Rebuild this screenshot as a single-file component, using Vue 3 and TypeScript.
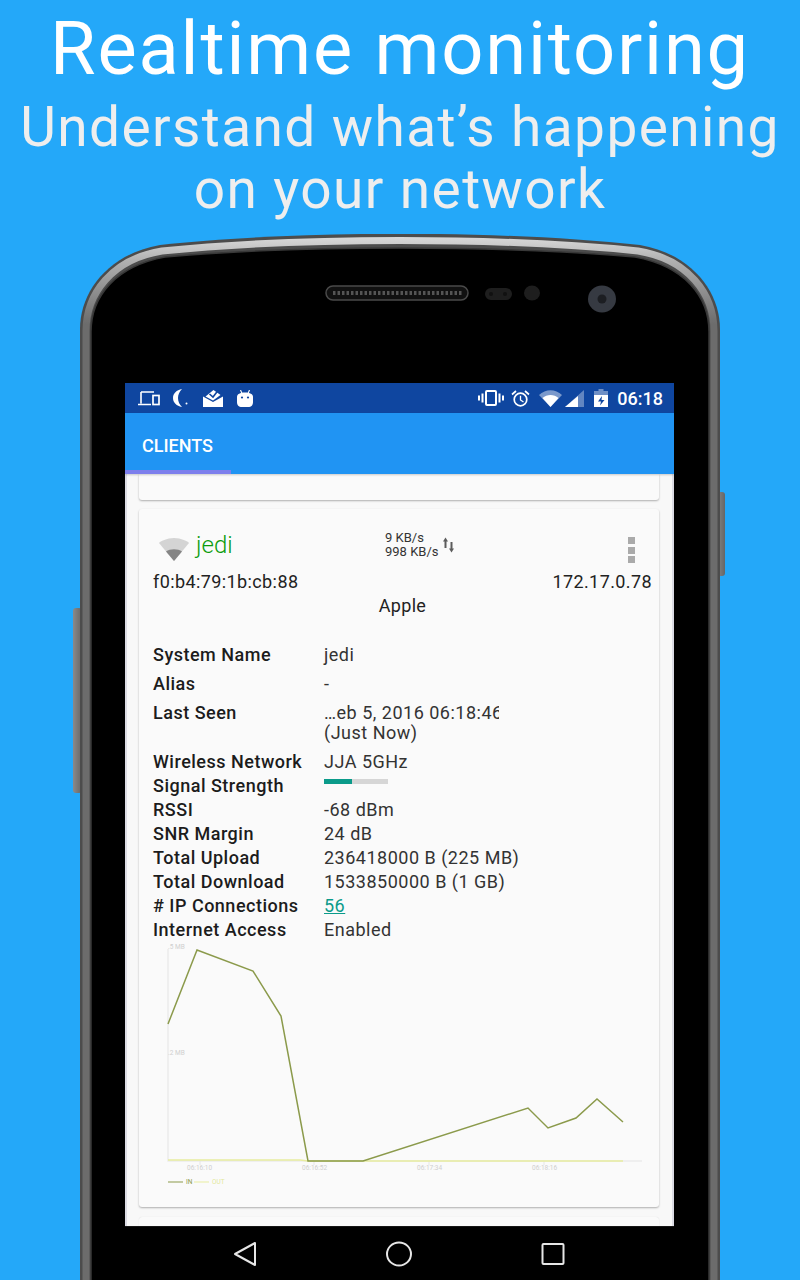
<script setup lang="ts">
interface Row { label: string; value: string; }
const rowsTop: Row[] = [
  { label: 'System Name', value: 'jedi' },
  { label: 'Alias', value: '-' },
];
const rowsBottom: Row[] = [
  { label: 'RSSI', value: '-68 dBm' },
  { label: 'SNR Margin', value: '24 dB' },
  { label: 'Total Upload', value: '236418000 B (225 MB)' },
  { label: 'Total Download', value: '1533850000 B (1 GB)' },
];
const inLine = '168,1024 197,950 253,971 281,1016 308,1161 363,1161 528,1108 548,1128 576,1118 597,1099 623,1122';
const outLine = '168,1160 300,1160 308,1161 623,1161';
</script>

<template>
  <div class="page">
    <header class="head">
      <h1>Realtime monitoring</h1>
      <h2>Understand what’s happening<br />on your network</h2>
    </header>

    <div class="phone">
      <svg class="shell" viewBox="0 0 800 1046" width="800" height="1046" aria-hidden="true">
        <defs>
          <linearGradient id="band" gradientUnits="userSpaceOnUse" x1="0" y1="0" x2="0" y2="90">
            <stop offset="0" stop-color="#dedede" />
            <stop offset="0.3" stop-color="#b0b0b0" />
            <stop offset="1" stop-color="#6c6c6c" />
          </linearGradient>
          <linearGradient id="btn" x1="0" y1="0" x2="1" y2="0">
            <stop offset="0" stop-color="#8a8a8a" />
            <stop offset="1" stop-color="#666" />
          </linearGradient>
        </defs>
        <rect x="73" y="374" width="9" height="185" rx="3" fill="url(#btn)" />
        <rect x="716" y="258" width="9" height="84" rx="3" fill="url(#btn)" />
        <path d="M80 1050V95C80 58 108 20 160 11C300 -4 500 -4 640 11C692 20 720 58 720 95V1050Z" fill="#4c4c4c" />
        <path d="M86 1050V97C86 60 112 25 162 17C300 3 500 3 638 17C688 25 714 60 714 97V1050" fill="none" stroke="url(#band)" stroke-width="7" />
        <path d="M91 1050V98C91 62 116 32 165 23C300 11 500 11 635 23C684 32 709 62 709 98V1050Z" fill="#000" stroke="#383838" stroke-width="1.500" />
        <rect x="326" y="52" width="142" height="14" rx="7" fill="#111" stroke="#4a4a4a" stroke-width="1.500" />
        <line x1="333" y1="59" x2="462" y2="59" stroke="#555" stroke-width="4" stroke-dasharray="2.500 2" />
        <rect x="485" y="54" width="27" height="12" rx="6" fill="#1e1e1e" />
        <circle cx="491" cy="60" r="2" fill="#111" />
        <circle cx="505" cy="60" r="2" fill="#111" />
        <ellipse cx="532" cy="59" rx="8" ry="7.500" fill="#1e1e1e" />
        <ellipse cx="602" cy="65" rx="14" ry="13.500" fill="#363a42" />
        <circle cx="602" cy="65" r="4.500" fill="#1c1e22" />
      </svg>

      <div class="screen">
        <div class="status">
          <div class="status-group">
            <svg class="i-laptop" width="22" height="15" viewBox="0 0 22 15"><path d="M3 1H16M3 1V12.500M0 13.500H13" fill="none" stroke="#fff" stroke-width="1.600" /><rect x="15" y="4.500" width="6" height="9" fill="none" stroke="#fff" stroke-width="1.700" /></svg>
            <svg class="i-moon" width="15" height="18" viewBox="0 0 15 18"><path d="M9 0C3.500 1 0 4.500 0 9S3.500 17 9 18C6.500 15.500 5 12.500 5 9S6.500 2.500 9 0Z" fill="#fff" /><circle cx="13.500" cy="14.500" r="1" fill="#fff" /></svg>
            <svg class="i-mail" width="20" height="18" viewBox="0 0 20 18"><path d="M0 7.500L10 13L20 7.500V18H0Z" fill="#fff" /><path d="M2.500 7.500L10.500 1L17.500 6L10 11.500Z" fill="#fff" /><path d="M6.500 5L10 8L15 1.500" fill="none" stroke="#0f46a0" stroke-width="1.600" /></svg>
            <svg class="i-droid" width="16" height="17" viewBox="0 0 16 17"><path d="M3.500 0L5 3.500M12.500 0L11 3.500" stroke="#fff" stroke-width="1.100" fill="none" /><path d="M0 7C0 4 3 2.500 8 2.500S16 4 16 7V12C16 15 14.500 17 11 17H5C1.500 17 0 15 0 12Z" fill="#fff" /><circle cx="5" cy="7.500" r="1.100" fill="#0f46a0" /><circle cx="11" cy="7.500" r="1.100" fill="#0f46a0" /></svg>
          </div>
          <div class="status-group">
            <svg class="i-vib" width="26" height="16" viewBox="0 0 26 16"><rect x="8" y="1" width="10" height="14" rx="1" fill="none" stroke="#fff" stroke-width="2" /><path d="M4.500 3.500V12.500M21.500 3.500V12.500M1 5.500V10.500M25 5.500V10.500" stroke="#fff" stroke-width="2" fill="none" /></svg>
            <svg class="i-alarm" width="19" height="17" viewBox="0 0 19 17"><circle cx="9.500" cy="9.500" r="6.300" fill="none" stroke="#fff" stroke-width="1.700" /><path d="M9.500 5.800V10L12.500 12" fill="none" stroke="#fff" stroke-width="1.300" /><path d="M1 4.500L5 1M18 4.500L14 1" stroke="#fff" stroke-width="1.700" /></svg>
            <svg class="i-wifi" width="23" height="17" viewBox="0 0 23 17"><path d="M0 5C6.500 -1.500 16.500 -1.500 23 5L11.500 17Z" fill="#fff" fill-opacity=".45" /><path d="M3.500 8C8 4 15 4 19.500 8L11.500 17Z" fill="#fff" /></svg>
            <svg class="i-signal" width="19" height="17" viewBox="0 0 19 17"><path d="M19 0V17H0Z" fill="#fff" fill-opacity=".35" /><path d="M13 6V17H0Z" fill="#fff" /></svg>
            <svg class="i-batt" width="14" height="18" viewBox="0 0 14 18"><path d="M4.500 0H9.500V2H14V18H0V2H4.500Z" fill="#fff" fill-opacity=".4" /><path d="M0 6H14V18H0Z" fill="#fff" /><path d="M8 7L4 12.500H7L6 16.500L10.500 11H7.500Z" fill="#0f46a0" /></svg>
            <span class="clock">06:18</span>
          </div>
        </div>

        <div class="toolbar">
          <span class="tab">CLIENTS</span>
          <span class="tab-line"></span>
        </div>

        <div class="content">
          <div class="card-stub"></div>
          <article class="card">
            <div class="card-top">
              <svg class="wifi-big" width="30" height="24" viewBox="0 0 30 24"><path d="M0 6C1 4.500 8 1 15 1S29 4.500 30 6L15 24Z" fill="#d4d4d4" /><path d="M7 14.500C11 11.500 19 11.500 23 14.500L15 24Z" fill="#858585" /></svg>
              <span class="name">jedi</span>
              <div class="rates">
                <div class="rate-text"><div>9 KB/s</div><div>998 KB/s</div></div>
                <svg width="13" height="16" viewBox="0 0 13 16"><path d="M3.500 0.500L6 4.500H4.500V11H2.500V4.500H1Z M9.500 15.500L7 11.500H8.500V5H10.500V11.500H12Z" fill="#5c5c5c" /></svg>
              </div>
              <div class="dots"><i></i><i></i><i></i></div>
            </div>
            <div class="ids"><span>f0:b4:79:1b:cb:88</span><span>172.17.0.78</span></div>
            <div class="vendor">Apple</div>

            <div class="info">
              <div v-for="r in rowsTop" :key="r.label" class="row tall">
                <span class="k">{{ r.label }}</span><span class="v">{{ r.value }}</span>
              </div>
              <div class="row seen">
                <span class="k">Last Seen</span>
                <span class="v"><span class="clip">…eb 5, 2016 06:18:46</span><span class="ago">(Just Now)</span></span>
              </div>
              <div class="row"><span class="k">Wireless Network</span><span class="v">JJA 5GHz</span></div>
              <div class="row">
                <span class="k">Signal Strength</span>
                <span class="v"><span class="bar"><span class="bar-fill" :style="{ width: '44%' }"></span></span></span>
              </div>
              <div v-for="r in rowsBottom" :key="r.label" class="row">
                <span class="k">{{ r.label }}</span><span class="v">{{ r.value }}</span>
              </div>
              <div class="row"><span class="k"># IP Connections</span><span class="v"><a class="link">56</a></span></div>
              <div class="row"><span class="k">Internet Access</span><span class="v">Enabled</span></div>
            </div>

            <svg class="chart" width="518" height="260" viewBox="140 940 518 260">
              <path d="M168 949V1161H642" fill="none" stroke="#ececec" stroke-width="1.500" />
              <path d="M200 1161V1165M314 1161V1165M429 1161V1165M544 1161V1165" stroke="#e6e6e6" stroke-width="1" />
              <polyline :points="outLine" fill="none" stroke="#e8eda0" stroke-width="1.500" />
              <polyline :points="inLine" fill="none" stroke="#8b9a4b" stroke-width="1.500" />
              <g class="tick">
                <text x="168" y="949">.5 MB</text>
                <text x="168" y="1055">.2 MB</text>
                <text x="187" y="1170">06:16:10</text>
                <text x="302" y="1170">06:16:52</text>
                <text x="417" y="1170">06:17:34</text>
                <text x="532" y="1170">06:18:16</text>
              </g>
              <path d="M168 1182H183" stroke="#8b9a4b" stroke-width="1" />
              <path d="M194 1182H209" stroke="#e8eda0" stroke-width="1" />
              <text class="leg in" x="186" y="1184">IN</text>
              <text class="leg out" x="212" y="1184">OUT</text>
            </svg>
          </article>
          <div class="card-next"></div>
        </div>

        <nav class="nav">
          <svg width="24" height="26" viewBox="0 0 24 26"><path d="M22 2V24L2 13Z" fill="none" stroke="#e6e6e6" stroke-width="2" stroke-linejoin="round" /></svg>
          <svg width="26" height="26" viewBox="0 0 26 26"><ellipse cx="13" cy="13" rx="12" ry="11.500" fill="none" stroke="#e6e6e6" stroke-width="2" /></svg>
          <svg width="24" height="24" viewBox="0 0 24 24"><rect x="1.500" y="2" width="21" height="20" rx="1" fill="none" stroke="#e6e6e6" stroke-width="2" /></svg>
        </nav>
      </div>
    </div>
  </div>
</template>

<style>
html, body { margin: 0; background: #24a8f9; }
</style>

<style scoped>
.page {
  width: 800px;
  height: 1280px;
  overflow: hidden;
  background: #24a8f9;
  font-family: Roboto, "Liberation Sans", sans-serif;
}
.head { height: 234px; text-align: center; overflow: hidden; }
h1 {
  margin: 0;
  padding-top: 9px;
  font-size: 74px;
  line-height: 80px;
  font-weight: 400;
  letter-spacing: 1.850px;
  color: #fff;
  white-space: nowrap;
}
h2 {
  margin: 0;
  padding-top: 7px;
  font-size: 55px;
  line-height: 62px;
  font-weight: 400;
  letter-spacing: 1.400px;
  color: #eeeeee;
  white-space: nowrap;
}
.phone { position: relative; height: 1046px; }
.shell { position: absolute; left: 0; top: 0; }
.screen {
  position: relative;
  width: 549px;
  margin-left: 125px;
  padding-top: 149px;
  display: flex;
  flex-direction: column;
}
.status {
  height: 30px;
  background: #0f46a0;
  display: flex;
  align-items: center;
  justify-content: space-between;
  padding: 0 11px 0 13px;
  color: #fff;
}
.status-group { display: flex; align-items: center; }
.i-moon { margin-left: 13px; }
.i-mail { margin-left: 15px; }
.i-droid { margin-left: 14px; }
.i-alarm { margin-left: 7px; }
.i-wifi { margin-left: 9px; }
.i-signal { margin-left: 3px; }
.i-batt { margin-left: 10px; }
.clock { font-size: 18px; font-weight: 500; margin-left: 9px; }
.toolbar {
  position: relative;
  height: 61px;
  background: #2094f3;
  display: flex;
  align-items: center;
  padding-left: 17px;
  box-shadow: 0 1px 2px rgba(0,0,0,.2);
  z-index: 1;
}
.tab { color: #fff; font-size: 18px; font-weight: 500; position: relative; top: 2px; }
.tab-line { position: absolute; left: 0; bottom: 0; width: 106px; height: 4px; background: #7d7fec; }
.content {
  height: 752px;
  overflow: hidden;
  background: #f8f8f8;
  padding: 0 13px 0 12px;
  border-left: 2px solid #dcdce4;
  border-right: 2px solid #dcdce4;
  box-sizing: border-box;
  display: flex;
  flex-direction: column;
}
.card-stub {
  height: 26px;
  flex: none;
  background: #fafafa;
  border-radius: 0 0 3px 3px;
  box-shadow: 0 1px 2px rgba(0,0,0,.3);
}
.card {
  flex: none;
  height: 698px;
  margin-top: 9px;
  background: #fafafa;
  border-radius: 3px;
  box-shadow: 0 1px 2px rgba(0,0,0,.3);
  padding: 0 7px 0 14px;
  box-sizing: border-box;
  position: relative;
  color: #222;
}
.card-next {
  flex: none;
  height: 30px;
  margin-top: 10px;
  background: #fafafa;
  border-radius: 3px;
  box-shadow: 0 0 1px rgba(0,0,0,.15);
}
.card-top { height: 63px; display: flex; align-items: flex-start; position: relative; }
.wifi-big { margin: 28px 7px 0 6px; flex: none; }
.name { color: #0c9c0c; font-size: 24px; line-height: 28px; font-weight: 300; margin-top: 22px; }
.rates {
  position: absolute;
  left: 232px;
  top: 22px;
  display: flex;
  gap: 4px;
  align-items: flex-start;
  font-size: 13px;
  line-height: 14px;
  color: #333;
}
.rates svg { margin-top: 6px; }
.dots { position: absolute; right: 17px; top: 28px; display: flex; flex-direction: column; gap: 2.500px; }
.dots i { display: block; width: 7px; height: 7px; background: #aaa; }
.ids {
  display: flex;
  justify-content: space-between;
  font-size: 18px;
  line-height: 20px;
  color: #222;
  letter-spacing: 0.400px;
}
.vendor { text-align: center; font-size: 18px; line-height: 20px; margin-top: 4px; letter-spacing: 0.300px; color: #222; }
.info { margin-top: 27px; font-size: 18px; letter-spacing: 0.500px; }
.row { display: flex; height: 24px; line-height: 24px; }
.row.tall { height: 29px; }
.row.seen { height: 49px; align-items: flex-start; }
.k { width: 171px; flex: none; font-weight: 500; color: #1c1c1c; white-space: nowrap; }
.v { color: #333; white-space: nowrap; font-weight: 400; }
.seen .v { display: flex; flex-direction: column; line-height: 20px; padding-top: 2px; }
.clip { width: 175px; overflow: hidden; white-space: nowrap; display: block; }
.ago { display: block; }
.bar { display: block; width: 64px; height: 5px; background: #d6d6d6; margin-top: 5px; }
.bar-fill { display: block; height: 100%; background: #0b9b8a; }
.link { color: #0b9b8a; text-decoration: underline; }
.chart { position: absolute; left: 1px; top: 431px; }
.tick text { font-size: 6.500px; fill: #cfcfcf; }
.leg { font-size: 6.500px; }
.leg.in { fill: #8b9a4b; }
.leg.out { fill: #e3e89a; }
.nav {
  height: 54px;
  background: #000;
  display: flex;
  align-items: center;
  gap: 129px;
  padding-left: 108px;
  box-sizing: border-box;
  border-top: 1px solid #161616;
}
</style>
